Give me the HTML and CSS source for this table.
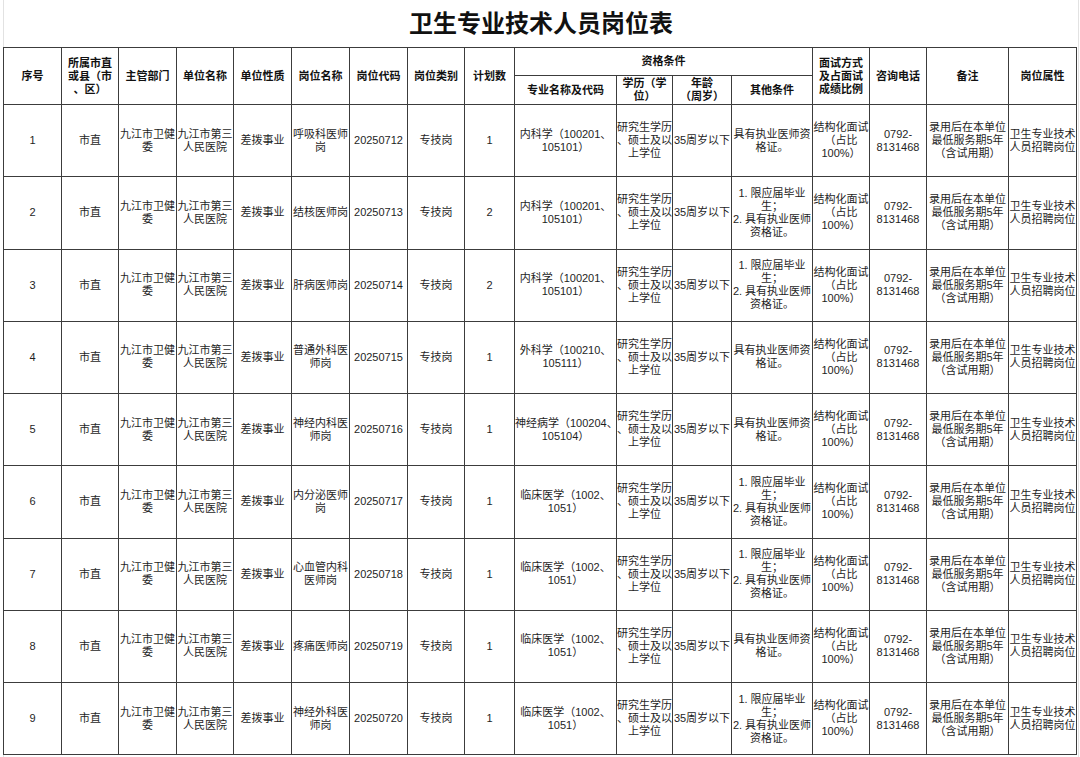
FILE: index.html
```html
<!DOCTYPE html>
<html lang="zh-CN">
<head>
<meta charset="utf-8">
<title>卫生专业技术人员岗位表</title>
<link rel="stylesheet" href="styles.css">
</head>
<body>
<div class="sheet">
  <h1 class="title">卫生专业技术人员岗位表</h1>
  <table class="grid">
    <colgroup>
      <col class="c58"><col class="c57"><col class="c58"><col class="c57"><col class="c58"><col class="c58"><col class="c58"><col class="c57"><col class="c50">
      <col class="c102"><col class="c56"><col class="c59"><col class="c81">
      <col class="c57"><col class="c57"><col class="c82"><col class="c68">
    </colgroup>
    <thead>
      <tr class="h1">
        <th rowspan="2">序号</th>
        <th rowspan="2">所属市直<br>或县（市<br>、区）</th>
        <th rowspan="2">主管部门</th>
        <th rowspan="2">单位名称</th>
        <th rowspan="2">单位性质</th>
        <th rowspan="2">岗位名称</th>
        <th rowspan="2">岗位代码</th>
        <th rowspan="2">岗位类别</th>
        <th rowspan="2">计划数</th>
        <th colspan="4">资格条件</th>
        <th rowspan="2">面试方式<br>及占面试<br>成绩比例</th>
        <th rowspan="2">咨询电话</th>
        <th rowspan="2">备注</th>
        <th rowspan="2">岗位属性</th>
      </tr>
      <tr class="h2">
        <th>专业名称及代码</th>
        <th>学历（学<br>位）</th>
        <th>年龄<br>（周岁）</th>
        <th>其他条件</th>
      </tr>
    </thead>
    <tbody>
      <tr>
        <td>1</td><td>市直</td><td>九江市卫健<br>委</td><td>九江市第三<br>人民医院</td><td>差拨事业</td><td>呼吸科医师<br>岗</td><td>20250712</td><td>专技岗</td><td>1</td>
        <td>内科学（100201、<br>105101）</td><td>研究生学历<br>、硕士及以<br>上学位</td><td>35周岁以下</td><td>具有执业医师资<br>格证。</td>
        <td>结构化面试<br>（占比<br>100%）</td><td>0792-<br>8131468</td><td>录用后在本单位<br>最低服务期5年<br>（含试用期）</td><td>卫生专业技术<br>人员招聘岗位</td>
      </tr>
      <tr>
        <td>2</td><td>市直</td><td>九江市卫健<br>委</td><td>九江市第三<br>人民医院</td><td>差拨事业</td><td>结核医师岗</td><td>20250713</td><td>专技岗</td><td>2</td>
        <td>内科学（100201、<br>105101）</td><td>研究生学历<br>、硕士及以<br>上学位</td><td>35周岁以下</td><td>1. 限应届毕业<br>生；<br>2. 具有执业医师<br>资格证。</td>
        <td>结构化面试<br>（占比<br>100%）</td><td>0792-<br>8131468</td><td>录用后在本单位<br>最低服务期5年<br>（含试用期）</td><td>卫生专业技术<br>人员招聘岗位</td>
      </tr>
      <tr>
        <td>3</td><td>市直</td><td>九江市卫健<br>委</td><td>九江市第三<br>人民医院</td><td>差拨事业</td><td>肝病医师岗</td><td>20250714</td><td>专技岗</td><td>2</td>
        <td>内科学（100201、<br>105101）</td><td>研究生学历<br>、硕士及以<br>上学位</td><td>35周岁以下</td><td>1. 限应届毕业<br>生；<br>2. 具有执业医师<br>资格证。</td>
        <td>结构化面试<br>（占比<br>100%）</td><td>0792-<br>8131468</td><td>录用后在本单位<br>最低服务期5年<br>（含试用期）</td><td>卫生专业技术<br>人员招聘岗位</td>
      </tr>
      <tr>
        <td>4</td><td>市直</td><td>九江市卫健<br>委</td><td>九江市第三<br>人民医院</td><td>差拨事业</td><td>普通外科医<br>师岗</td><td>20250715</td><td>专技岗</td><td>1</td>
        <td>外科学（100210、<br>105111）</td><td>研究生学历<br>、硕士及以<br>上学位</td><td>35周岁以下</td><td>具有执业医师资<br>格证。</td>
        <td>结构化面试<br>（占比<br>100%）</td><td>0792-<br>8131468</td><td>录用后在本单位<br>最低服务期5年<br>（含试用期）</td><td>卫生专业技术<br>人员招聘岗位</td>
      </tr>
      <tr>
        <td>5</td><td>市直</td><td>九江市卫健<br>委</td><td>九江市第三<br>人民医院</td><td>差拨事业</td><td>神经内科医<br>师岗</td><td>20250716</td><td>专技岗</td><td>1</td>
        <td>神经病学（100204、<br>105104）</td><td>研究生学历<br>、硕士及以<br>上学位</td><td>35周岁以下</td><td>具有执业医师资<br>格证。</td>
        <td>结构化面试<br>（占比<br>100%）</td><td>0792-<br>8131468</td><td>录用后在本单位<br>最低服务期5年<br>（含试用期）</td><td>卫生专业技术<br>人员招聘岗位</td>
      </tr>
      <tr>
        <td>6</td><td>市直</td><td>九江市卫健<br>委</td><td>九江市第三<br>人民医院</td><td>差拨事业</td><td>内分泌医师<br>岗</td><td>20250717</td><td>专技岗</td><td>1</td>
        <td>临床医学（1002、<br>1051）</td><td>研究生学历<br>、硕士及以<br>上学位</td><td>35周岁以下</td><td>1. 限应届毕业<br>生；<br>2. 具有执业医师<br>资格证。</td>
        <td>结构化面试<br>（占比<br>100%）</td><td>0792-<br>8131468</td><td>录用后在本单位<br>最低服务期5年<br>（含试用期）</td><td>卫生专业技术<br>人员招聘岗位</td>
      </tr>
      <tr>
        <td>7</td><td>市直</td><td>九江市卫健<br>委</td><td>九江市第三<br>人民医院</td><td>差拨事业</td><td>心血管内科<br>医师岗</td><td>20250718</td><td>专技岗</td><td>1</td>
        <td>临床医学（1002、<br>1051）</td><td>研究生学历<br>、硕士及以<br>上学位</td><td>35周岁以下</td><td>1. 限应届毕业<br>生；<br>2. 具有执业医师<br>资格证。</td>
        <td>结构化面试<br>（占比<br>100%）</td><td>0792-<br>8131468</td><td>录用后在本单位<br>最低服务期5年<br>（含试用期）</td><td>卫生专业技术<br>人员招聘岗位</td>
      </tr>
      <tr>
        <td>8</td><td>市直</td><td>九江市卫健<br>委</td><td>九江市第三<br>人民医院</td><td>差拨事业</td><td>疼痛医师岗</td><td>20250719</td><td>专技岗</td><td>1</td>
        <td>临床医学（1002、<br>1051）</td><td>研究生学历<br>、硕士及以<br>上学位</td><td>35周岁以下</td><td>具有执业医师资<br>格证。</td>
        <td>结构化面试<br>（占比<br>100%）</td><td>0792-<br>8131468</td><td>录用后在本单位<br>最低服务期5年<br>（含试用期）</td><td>卫生专业技术<br>人员招聘岗位</td>
      </tr>
      <tr>
        <td>9</td><td>市直</td><td>九江市卫健<br>委</td><td>九江市第三<br>人民医院</td><td>差拨事业</td><td>神经外科医<br>师岗</td><td>20250720</td><td>专技岗</td><td>1</td>
        <td>临床医学（1002、<br>1051）</td><td>研究生学历<br>、硕士及以<br>上学位</td><td>35周岁以下</td><td>1. 限应届毕业<br>生；<br>2. 具有执业医师<br>资格证。</td>
        <td>结构化面试<br>（占比<br>100%）</td><td>0792-<br>8131468</td><td>录用后在本单位<br>最低服务期5年<br>（含试用期）</td><td>卫生专业技术<br>人员招聘岗位</td>
      </tr>
    </tbody>
  </table>
</div>
</body>
</html>
```

FILE: styles.css
```css
html, body {
  margin: 0;
  padding: 0;
  background: #ffffff;
}

body {
  font-family: "Liberation Sans", "Noto Sans CJK SC", sans-serif;
  color: #1a1a1a;
  overflow: hidden;
}

.sheet {
  margin-left: 3px;
  width: 1074px;
  border-left: 1px solid #e2e2e2;
  border-right: 1px solid #e2e2e2;
  height: 757px;
}

.title {
  margin: 0 0 3px 0;
  height: 44px;
  line-height: 44px;
  text-align: center;
  font-size: 24px;
  font-weight: 700;
  color: #111;
  font-family: "Noto Sans CJK SC", sans-serif;
}

.grid {
  border-collapse: collapse;
  table-layout: fixed;
  width: 1074px;
  margin-left: -1px;
}

.grid th,
.grid td {
  border: 1px solid #3c3c3c;
  padding: 0;
  text-align: center;
  vertical-align: middle;
  white-space: nowrap;
  font-family: "Liberation Sans", "Noto Sans CJK SC", sans-serif;
  font-size: 11px;
  line-height: 13px;
  overflow: hidden;
}

.grid th {
  font-weight: 700;
  color: #111;
}

.grid td {
  font-weight: 400;
  color: #1e1e1e;
}

.h1 { height: 28px; }
.h2 { height: 29px; }

.grid tbody tr { height: 72.25px; }

.c50 { width: 50px; }
.c56 { width: 56px; }
.c57 { width: 57px; }
.c58 { width: 58px; }
.c59 { width: 59px; }
.c68 { width: 68px; }
.c81 { width: 81px; }
.c82 { width: 82px; }
.c102 { width: 102px; }
```
